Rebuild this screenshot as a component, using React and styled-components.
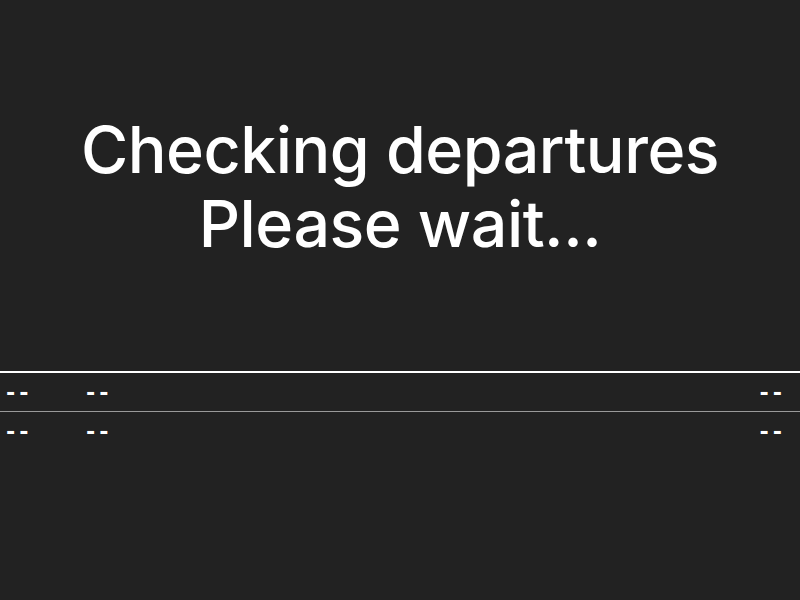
import React from "react";
import styled, { createGlobalStyle } from "styled-components";

const Global = createGlobalStyle`
  html, body { margin: 0; padding: 0; background: #222222; }
  body { width: 800px; height: 600px; overflow: hidden; }
`;

const Page = styled.div`
  width: 800px;
  height: 600px;
  background: #222222;
  color: #ffffff;
  display: flex;
  flex-direction: column;
`;

const Message = styled.h1`
  margin: 0;
  padding-top: 113px;
  height: 371px;
  flex: none;
  box-sizing: border-box;
  font-family: Inter, "Noto Sans", sans-serif;
  font-weight: 500;
  font-size: 64.5px;
  line-height: 74px;
  text-align: center;
  letter-spacing: -0.5px;
`;

const Board = styled.div`
  border-top: 2px solid #ffffff;
  display: flex;
  flex-direction: column;
`;

const Row = styled.div`
  display: grid;
  grid-template-columns: 80px 1fr auto;
  align-items: center;
  height: 38px;
  padding: 0 16px 0 4px;
  border-bottom: ${(p) => (p.$last ? "none" : "1px solid #9a9a9a")};
  font-family: "DejaVu Sans Mono", monospace;
  font-weight: bold;
  font-size: 22px;
  color: #ffffff;
`;

const Cell = styled.span`
  white-space: nowrap;
`;

export default function App() {
  const rows = [0, 1];
  return (
    <Page>
      <Global />
      <Message>
        Checking departures
        <br />
        Please wait...
      </Message>
      <Board>
        {rows.map((r, i) => (
          <Row key={r} $last={i === rows.length - 1}>
            <Cell>--</Cell>
            <Cell>--</Cell>
            <Cell>--</Cell>
          </Row>
        ))}
      </Board>
    </Page>
  );
}
